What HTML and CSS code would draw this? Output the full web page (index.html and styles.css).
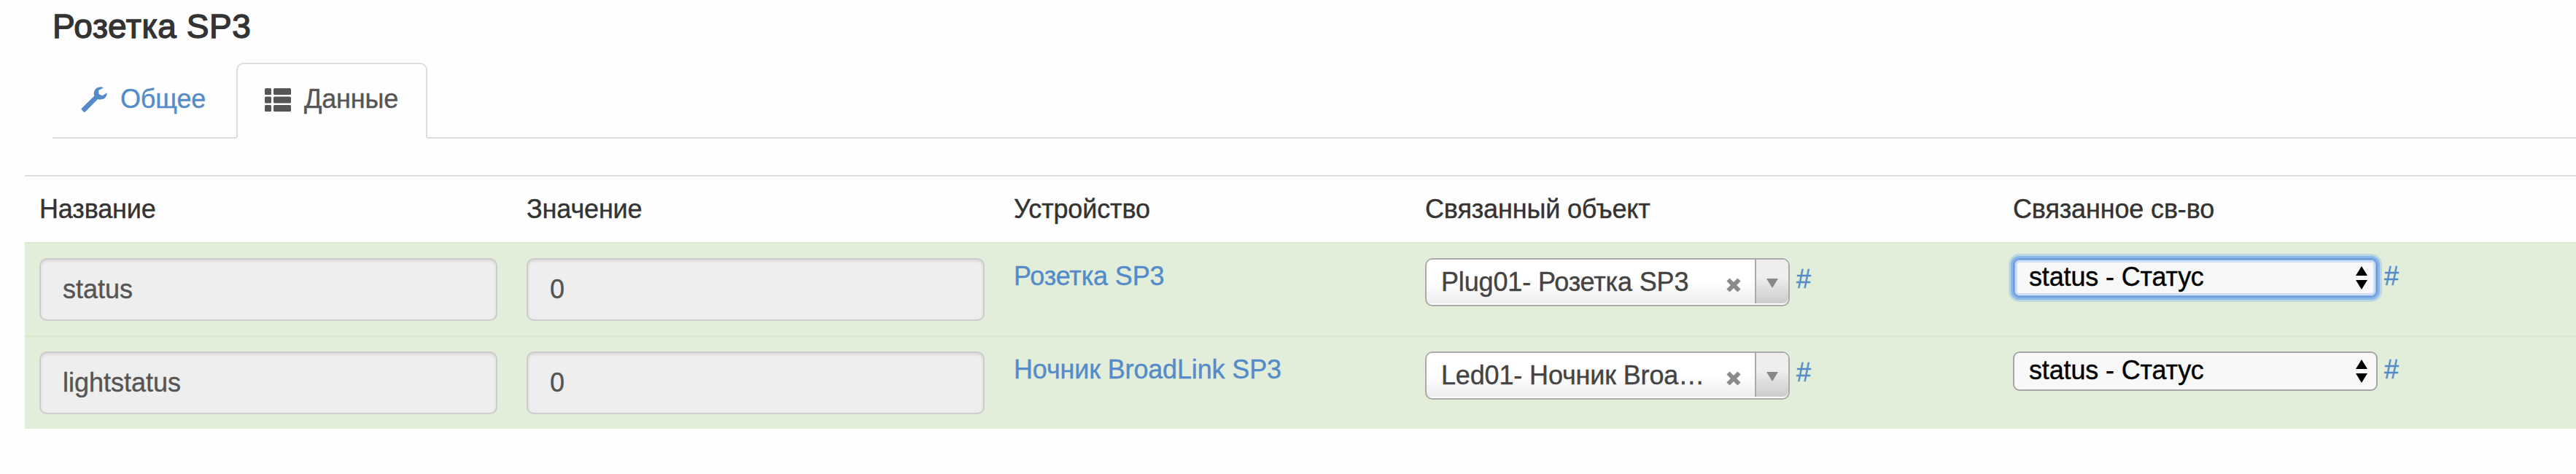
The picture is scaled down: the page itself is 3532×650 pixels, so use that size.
FILE: index.html
```html
<!DOCTYPE html>
<html lang="ru">
<head>
  <meta charset="UTF-8">
  <title>Розетка SP3</title>
  <link rel="stylesheet" href="styles.css">
</head>
<body>
  <div class="page-header">
    <h3>Розетка SP3</h3>
    <ul class="nav-tabs">
      <li>
        <a href="#">
          <svg class="icon" width="36" height="36" viewBox="0 0 36 36">
            <path fill="currentColor" d="M31 2.2C27 .4 21.500 1.500 19 5.500c-1.600 2.600-1.600 5.500-.7 8L1 30.600c-.6.6-.6 1.400 0 2l2.800 2.800c.6.6 1.400.6 2 0L23 17.900c4 1.300 8.300.2 10.800-2.700 1.500-1.800 2-3.900 1.800-5.900l-6.300 3.900-4.700-2.200-.4-4.900z"/>
          </svg>
          <span>Общее</span>
        </a>
      </li>
      <li class="active">
        <a href="#">
          <svg class="icon" width="36" height="36" viewBox="0 0 36 36">
            <g fill="currentColor">
              <rect x="0" y="3" width="9" height="9" rx="1.500"/>
              <rect x="12" y="3" width="24" height="9" rx="1.500"/>
              <rect x="0" y="14.500" width="9" height="9" rx="1.500"/>
              <rect x="12" y="14.500" width="24" height="9" rx="1.500"/>
              <rect x="0" y="26" width="9" height="9" rx="1.500"/>
              <rect x="12" y="26" width="24" height="9" rx="1.500"/>
            </g>
          </svg>
          <span>Данные</span>
        </a>
      </li>
    </ul>
  </div>

  <table class="table">
    <colgroup>
      <col class="col-name">
      <col class="col-value">
      <col class="col-device">
      <col class="col-object">
      <col class="col-property">
    </colgroup>
    <thead>
      <tr>
        <td>Название</td>
        <td>Значение</td>
        <td>Устройство</td>
        <td>Связанный объект</td>
        <td>Связанное св-во</td>
      </tr>
    </thead>
    <tbody>
      <tr class="success">
        <td><input type="text" class="form-control" value="status" disabled></td>
        <td><input type="text" class="form-control" value="0" disabled></td>
        <td><a href="#">Розетка SP3</a></td>
        <td>
          <div class="field">
            <div class="chosen">
              <span class="chosen-text">Plug01- Розетка SP3</span>
              <svg class="chosen-clear" width="20" height="20" viewBox="0 0 20 20"><path d="M2.500 2.500l15 15M17.500 2.500l-15 15" stroke="#8b8b8b" stroke-width="6"/></svg>
              <span class="chosen-arrow"><svg width="16" height="13" viewBox="0 0 16 13"><path fill="#888" d="M0 0h16L8 13z"/></svg></span>
            </div>
            <a href="#" class="object-link">#</a>
          </div>
        </td>
        <td>
          <div class="field">
            <div class="select focused">
              <span>status - Статус</span>
              <svg width="16" height="32" viewBox="0 0 16 32"><path d="M0 13L8 0l8 13zM0 19h16L8 32z"/></svg>
            </div>
            <a href="#">#</a>
          </div>
        </td>
      </tr>
      <tr class="success">
        <td><input type="text" class="form-control" value="lightstatus" disabled></td>
        <td><input type="text" class="form-control" value="0" disabled></td>
        <td><a href="#">Ночник BroadLink SP3</a></td>
        <td>
          <div class="field">
            <div class="chosen">
              <span class="chosen-text">Led01- Ночник Broa…</span>
              <svg class="chosen-clear" width="20" height="20" viewBox="0 0 20 20"><path d="M2.500 2.500l15 15M17.500 2.500l-15 15" stroke="#8b8b8b" stroke-width="6"/></svg>
              <span class="chosen-arrow"><svg width="16" height="13" viewBox="0 0 16 13"><path fill="#888" d="M0 0h16L8 13z"/></svg></span>
            </div>
            <a href="#" class="object-link">#</a>
          </div>
        </td>
        <td>
          <div class="field">
            <div class="select">
              <span>status - Статус</span>
              <svg width="16" height="32" viewBox="0 0 16 32"><path d="M0 13L8 0l8 13zM0 19h16L8 32z"/></svg>
            </div>
            <a href="#">#</a>
          </div>
        </td>
      </tr>
    </tbody>
  </table>
</body>
</html>
```
FILE: styles.css
```css
* {
  box-sizing: border-box;
}

body {
  margin: 0;
  background: #fefefe;
  color: #333;
  font-family: "Liberation Sans", Arial, sans-serif;
  font-size: 36px;
  line-height: 50px;
  letter-spacing: -0.15px;
  -webkit-text-stroke: 0.4px;
  overflow: hidden;
}

a {
  color: #548bc8;
  text-decoration: none;
}

.page-header {
  padding: 10px 0 0 72px;
}

h3 {
  margin: 0 0 24px;
  font-size: 46px;
  font-weight: normal;
  line-height: 52px;
  letter-spacing: 0.6px;
  -webkit-text-stroke: 1.4px #333;
}

/* tabs */
.nav-tabs {
  display: flex;
  height: 104px;
  margin: 0;
  padding: 0;
  list-style: none;
  border-bottom: 2px solid #ddd;
}

.nav-tabs li {
  height: 104px;
  margin-right: 4px;
}

.nav-tabs a {
  display: flex;
  align-items: center;
  height: 104px;
  padding: 0 30px 4px 37px;
  border: 2px solid transparent;
  border-radius: 10px 10px 0 0;
}

.nav-tabs li:first-child {
  width: 248px;
}

.nav-tabs .active a {
  width: 262px;
  color: #555;
  background: #fefefe;
  border-color: #ddd;
  border-bottom-color: #fefefe;
}

.icon {
  flex: none;
  margin-right: 18px;
}

/* table */
.table {
  width: 3498px;
  margin: 50px 0 0 34px;
  border-collapse: separate;
  border-spacing: 0;
  table-layout: fixed;
}

.col-name,
.col-value {
  width: 668px;
}

.col-device {
  width: 564px;
}

.col-object {
  width: 806px;
}

.table td {
  padding: 20px;
  vertical-align: top;
  border-top: 2px solid #ddd;
}

.table .success td {
  height: 128px;
  background: #e2eeda;
  border-top-color: #dae7c8;
}

.form-control {
  display: block;
  width: 100%;
  height: 86px;
  padding: 0 30px;
  font: inherit;
  color: #555;
  background: #eee;
  border: 2px solid #ccc;
  border-radius: 10px;
  box-shadow: inset 0 2px 4px rgba(0, 0, 0, 0.1);
}

.field {
  display: flex;
  align-items: flex-start;
  gap: 9px;
}

.object-link {
  margin-top: 4px;
}

/* object picker */
.chosen {
  display: flex;
  align-items: center;
  width: 500px;
  height: 66px;
  padding: 0 0 2px 20px;
  color: #444;
  background: linear-gradient(#fff 50%, #eee) no-repeat #fff;
  background-size: 100% 60px;
  border: 2px solid #aaa;
  border-radius: 10px;
}

.chosen-text {
  width: 370px;
  padding-top: 2px;
  white-space: nowrap;
}

.chosen-clear {
  margin: 9px 0 0 21px;
}

.chosen-arrow {
  display: flex;
  align-items: center;
  justify-content: center;
  width: 46px;
  height: 60px;
  margin-left: auto;
  padding-top: 4px;
  background: linear-gradient(#eee 40%, #ccc);
  border-left: 2px solid #aaa;
  border-radius: 0 8px 8px 0;
}

/* property select */
.select {
  display: flex;
  align-items: center;
  justify-content: space-between;
  width: 500px;
  height: 54px;
  padding: 0 12px 3px 20px;
  color: #000;
  background: #f8f8f8;
  border: 2px solid #a6a6a6;
  border-radius: 9px;
}

.select svg {
  margin-top: 2px;
}

.select.focused {
  border-color: #6f9bd8;
  box-shadow: inset 0 0 0 1px #8ab4ec, inset 0 0 0 4px #cfdff8, 0 0 0 3px #88b7ea, 0 0 0 6px #bdd6e0;
}
```
